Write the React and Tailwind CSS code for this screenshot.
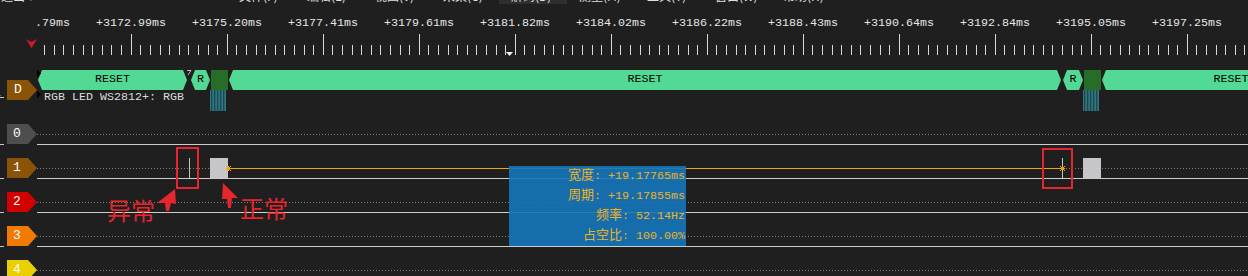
import React from "react";

const MONO = "font-['Liberation_Mono','Noto_Sans_CJK_SC',monospace]";

const ticks = Array.from({ length: 126 }, (_, k) => k + 1).map((i) => ({
  x: Math.floor(131.2 + 9.6 * (i - 10)),
  major: i % 10 === 0,
}));

const labels = [
  "+3170.79ms",
  "+3172.99ms",
  "+3175.20ms",
  "+3177.41ms",
  "+3179.61ms",
  "+3181.82ms",
  "+3184.02ms",
  "+3186.22ms",
  "+3188.43ms",
  "+3190.64ms",
  "+3192.84ms",
  "+3195.05ms",
  "+3197.25ms",
];

const menu = ["文件(F)", "编辑(E)", "视图(V)", "采集(C)", "解码(D)", "测量(M)", "工具(T)", "窗口(W)", "帮助(H)"];

const channels = [
  { n: "0", bg: "bg-[#4e4e4e]" },
  { n: "1", bg: "bg-[#8a5307]" },
  { n: "2", bg: "bg-[#d20000]" },
  { n: "3", bg: "bg-[#f27a00]" },
  { n: "4", bg: "bg-[#ead000]" },
];

const HEX =
  "[clip-path:polygon(4px_0,calc(100%_-_4px)_0,100%_50%,calc(100%_-_4px)_100%,4px_100%,0_50%)]";
const PENT = "[clip-path:polygon(0_0,21px_0,30px_50%,21px_100%,0_100%)]";
const DOTS =
  "bg-[repeating-linear-gradient(90deg,#7c7c7c_0_1px,transparent_1px_3px)]";
const TEAL =
  "bg-[repeating-linear-gradient(90deg,#2f7682_0_1px,#1c4a52_1px_2px,#2a6670_2px_3px)]";

function Seg({ left, width, children, dark }) {
  if (dark) {
    return (
      <div
        className="absolute top-[10px] h-[20px] bg-[#286d27]"
        style={{ left, width }}
      />
    );
  }
  return (
    <div
      className={`absolute top-[10px] h-[20px] bg-[#52d994] ${HEX} flex items-center justify-center text-black text-[11.67px] leading-none`}
      style={{ left, width }}
    >
      {children}
    </div>
  );
}

function Star({ left, top }) {
  return (
    <svg className="absolute" style={{ left, top }} width="5" height="5" viewBox="0 0 5 5">
      <path d="M0 0L5 5M5 0L0 5M2.5 0V5M0 2.5H5" stroke="#f0a800" strokeWidth="1" />
    </svg>
  );
}

export default function App() {
  return (
    <div className={`relative w-[1248px] h-[276px] overflow-hidden bg-[#1f1f1f] ${MONO}`}>
      {/* menu strip (clipped) */}
      <div className="h-[4px] overflow-hidden flex items-start font-['Noto_Sans_CJK_SC',sans-serif] text-[12px] leading-[14px] text-[#e0e0e0]">
        <div className="w-[227px] shrink-0 h-[15px] -mt-[11px] pl-[1px]">退出 ▾</div>
        {menu.map((m, i) => (
          <div
            key={m}
            className={`w-[68px] shrink-0 h-[15px] -mt-[11px] pl-[12px] ${i === 4 ? "bg-[#2e2e2e]" : ""}`}
          >
            {m}
          </div>
        ))}
      </div>

      {/* ruler */}
      <div className="h-[56px] flex">
        <div className="w-[37px] shrink-0 relative">
          <svg className="absolute left-[26px] top-[35px]" width="11" height="9" viewBox="0 0 11 9">
            <polygon points="0,0 5.5,3 11,0 5.5,9" fill="#d3192b" />
          </svg>
        </div>
        <div className="flex-1 relative overflow-hidden">
          {labels.map((l, k) => (
            <div
              key={l}
              className="absolute top-[12px] w-[72px] text-center text-[11.67px] leading-[14px] text-[#e6e6e6] whitespace-nowrap"
              style={{ left: 131 + 96 * (k - 1) - 37 - 36 }}
            >
              {l}
            </div>
          ))}
          {ticks.map((t, i) => (
            <div
              key={i}
              className={`absolute w-[1px] bg-[#d8d8d8] ${t.major ? "top-[30px] h-[21px]" : "top-[41px] h-[10px]"}`}
              style={{ left: t.x - 37 }}
            />
          ))}
          <svg className="absolute left-[469px] top-[48px]" width="7" height="4" viewBox="0 0 7 4">
            <polygon points="0,0 7,0 3.5,4" fill="#f2f2f2" />
          </svg>
        </div>
      </div>

      {/* decoder row */}
      <div className="h-[64px] flex">
        <div className="w-[37px] shrink-0 relative">
          <span className="absolute -left-[6px] top-[26px] text-[11.67px] leading-[14px] text-[#d0d0d0]">1</span>
          <div className="absolute left-0 top-[37px] w-[4px] h-[1px] bg-[#c8c8c8]" />
          <div className={`absolute left-[7px] top-[20px] w-[30px] h-[20px] bg-[#8a5307] ${PENT} pl-[7px] text-white text-[13px] leading-[20px]`}>
            D
          </div>
        </div>
        <div className="flex-1 relative overflow-hidden">
          <Seg left={1} width={149}>RESET</Seg>
          <svg className="absolute left-[150px] top-[10px]" width="5" height="6" viewBox="0 0 5 6">
            <path d="M0 0.5H4L1 5" stroke="#bdbdbd" strokeWidth="1" fill="none" />
          </svg>
          <Seg left={154} width={19}>R</Seg>
          <Seg left={174} width={17} dark />
          <div className={`absolute left-[173px] top-[30px] w-[16px] h-[21px] ${TEAL}`} />
          <Seg left={192} width={832}>RESET</Seg>
          <Seg left={1026} width={20}>R</Seg>
          <Seg left={1047} width={17} dark />
          <div className={`absolute left-[1046px] top-[30px] w-[16px] h-[21px] ${TEAL}`} />
          <Seg left={1065} width={258}>RESET</Seg>
          <svg className="absolute left-0 top-[10px]" width="4" height="7" viewBox="0 0 4 7">
            <polygon points="0,0 4,3.5 0,7" fill="#000" />
          </svg>
          <svg className="absolute left-0 top-[31px]" width="4" height="7" viewBox="0 0 4 7">
            <polygon points="0,0 4,3.5 0,7" fill="#000" />
          </svg>
          <div className="absolute left-[7px] top-[30px] text-[11.67px] leading-[14px] text-[#dcdcdc] whitespace-nowrap">
            RGB LED WS2812+: RGB
          </div>
        </div>
      </div>

      {/* channels */}
      {channels.map((c, idx) => (
        <div key={c.n} className="h-[34px] flex">
          <div className="w-[37px] shrink-0 relative">
            <div className={`absolute left-[7px] top-0 w-[30px] h-[20px] ${c.bg} ${PENT} pl-[6px] text-white text-[13px] leading-[20px]`}>
              {c.n}
            </div>
            <div className="absolute left-0 top-[20px] w-[4px] h-[1px] bg-[#c8c8c8]" />
          </div>
          <div className="flex-1 relative overflow-hidden">
            <div className={`absolute left-0 right-0 top-[10px] h-[1px] ${DOTS}`} />
            <div className="absolute left-0 right-0 top-[20px] h-[1px] bg-[#cdcdcd]" />
            {idx === 1 && (
              <>
                <div className="absolute left-[152px] top-0 w-[1px] h-[20px] bg-[#c4c4c4]" />
                <div className="absolute left-[173px] top-0 w-[18px] h-[20px] bg-[#c6c6c8]" />
                <div className="absolute left-[191px] top-[10px] w-[834px] h-[1px] bg-[#f0a800]" />
                <Star left={189} top={8} />
                <div className="absolute left-[1025px] top-0 w-[1px] h-[20px] bg-[#c4c4c4]" />
                <Star left={1023} top={8} />
                <div className="absolute left-[1046px] top-0 w-[18px] h-[20px] bg-[#c6c6c8]" />
              </>
            )}
          </div>
        </div>
      ))}

      {/* annotations overlay */}
      <div className="absolute left-[176px] top-[147px] w-[23px] h-[42px] border-2 border-[#e5262c]" />
      <div className="absolute left-[1042px] top-[148px] w-[31px] h-[41px] border-2 border-[#e5262c]" />

      <svg className="absolute left-0 top-0 pointer-events-none" width="1248" height="276">
        <polygon points="175,189 176,204 171,203 169,211 166,211 165,203 157,203" fill="#e5262c" />
        <polygon points="223,183 238,198 232,198 231,208 228,208 227,199 222,199" fill="#e5262c" />
      </svg>

      <div className="absolute left-[107px] top-[196px] text-[24px] leading-[28px] text-[#e5262c] font-['Noto_Sans_CJK_SC',sans-serif]">
        异常
      </div>
      <div className="absolute left-[240px] top-[194px] text-[24px] leading-[28px] text-[#e5262c] font-['Noto_Sans_CJK_SC',sans-serif]">
        正常
      </div>

      {/* measurement tooltip */}
      <div className="absolute left-[509px] top-[166px] w-[177px] h-[80px] bg-[#1575bb]/90 flex flex-col items-end pr-[1px] text-[#f0b21c] text-[11.67px] leading-[20px] whitespace-pre">
        <div>
          <span className="text-[13px]">宽度</span>: +19.17765ms
        </div>
        <div>
          <span className="text-[13px]">周期</span>: +19.17855ms
        </div>
        <div>
          <span className="text-[13px]">频率</span>: 52.14Hz
        </div>
        <div>
          <span className="text-[13px]">占空比</span>: 100.00%
        </div>
      </div>
    </div>
  );
}
